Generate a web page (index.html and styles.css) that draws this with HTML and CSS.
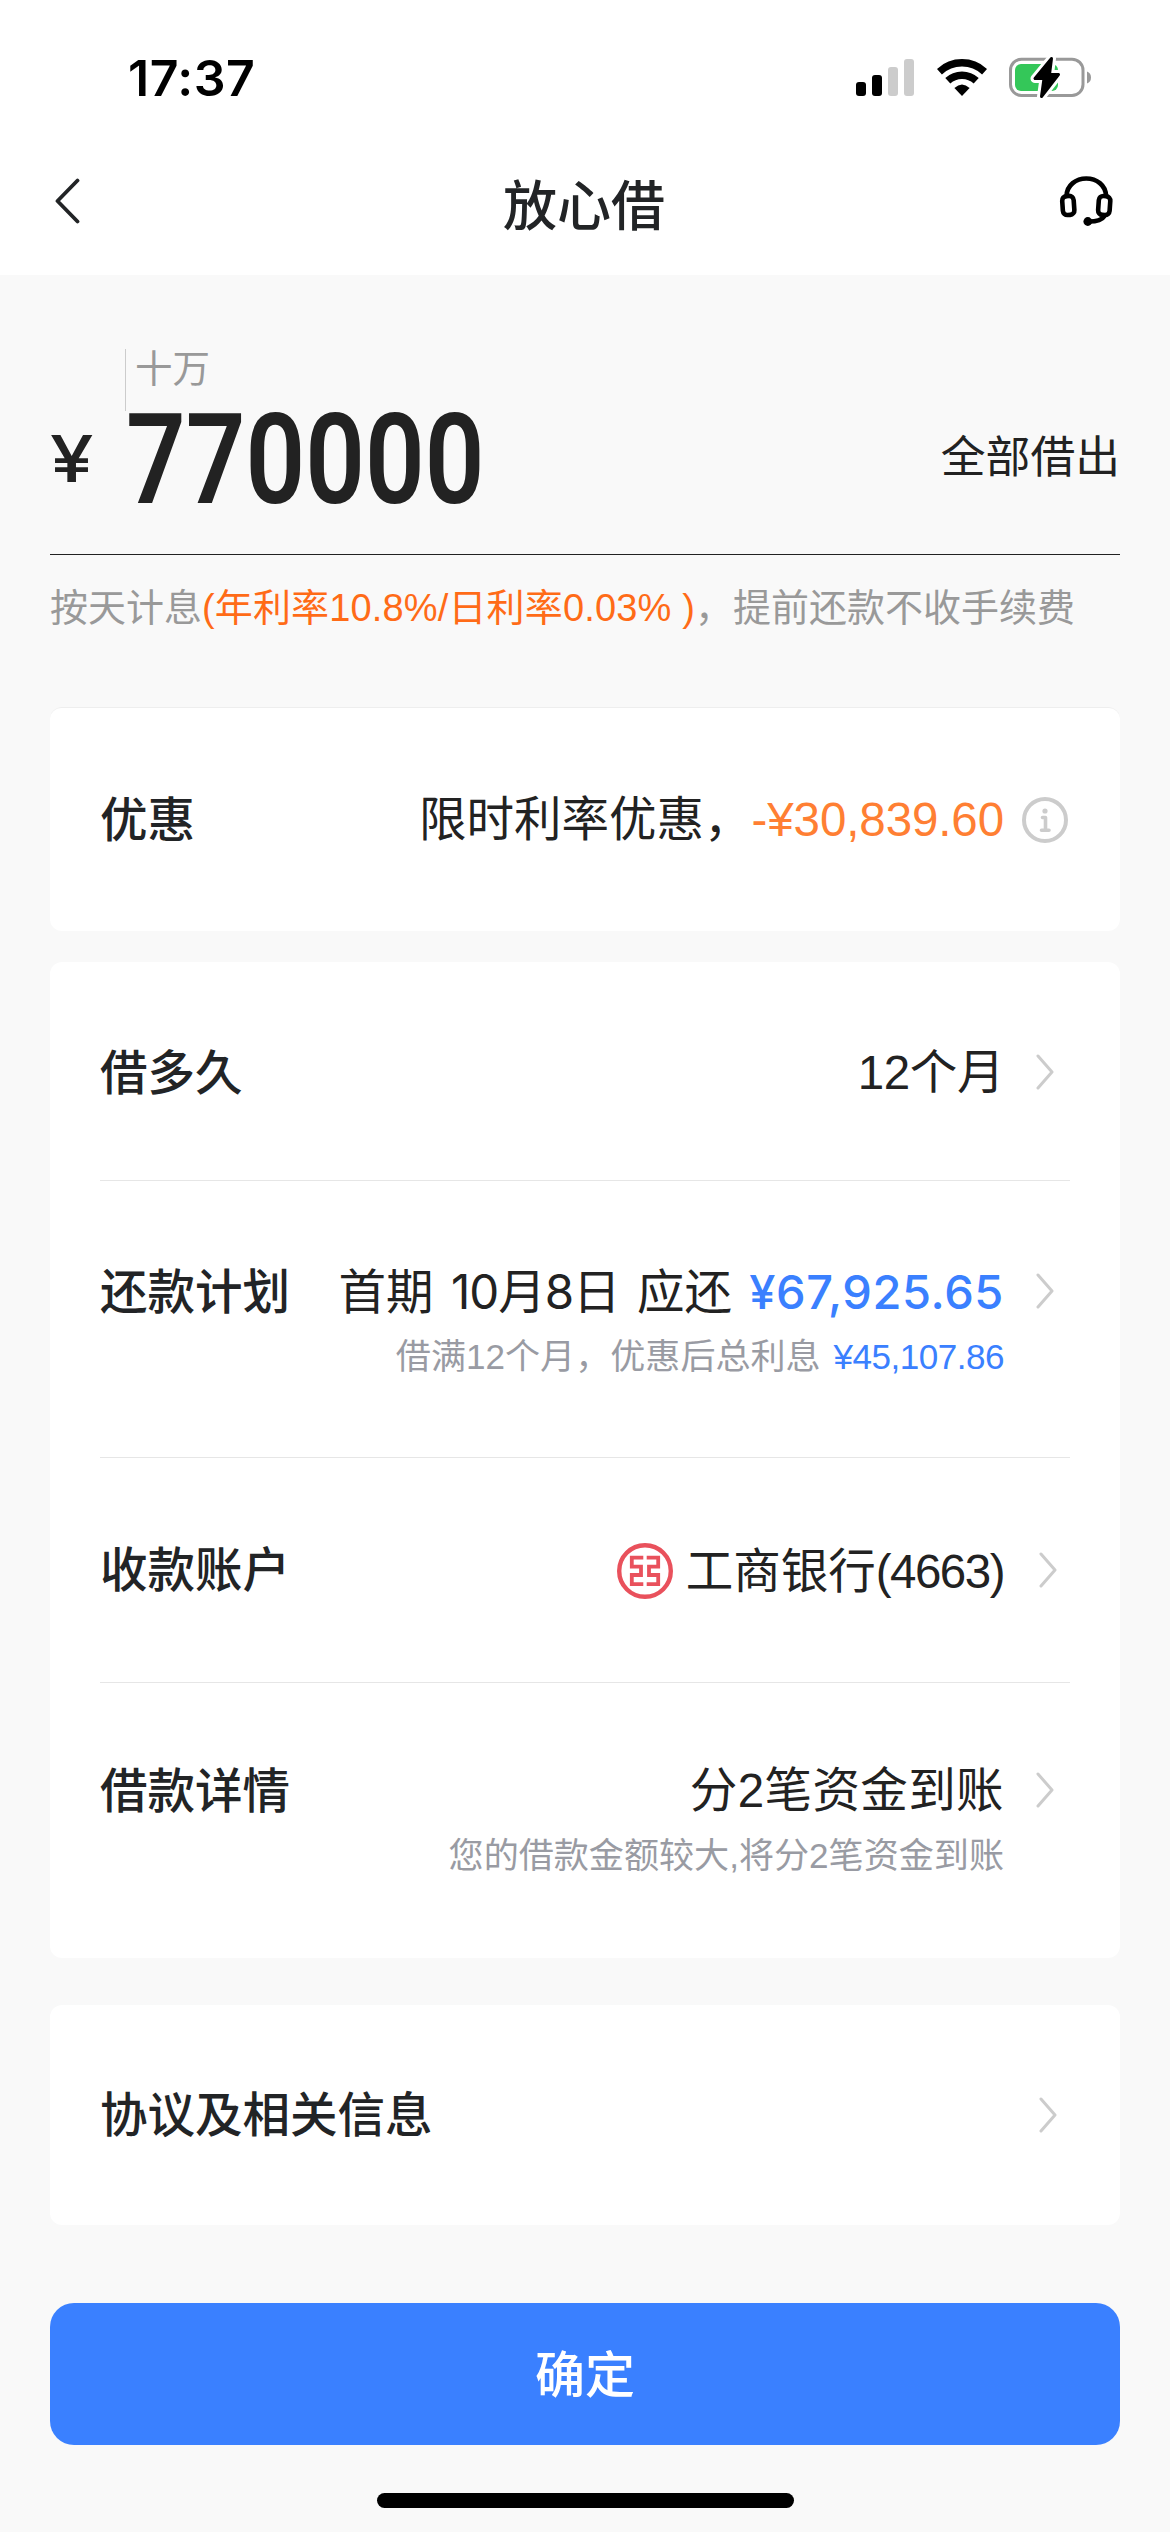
FILE: index.html
```html
<!DOCTYPE html>
<html lang="zh-CN">
<head>
<meta charset="utf-8">
<title>放心借</title>
<link rel="stylesheet" href="styles.css">
</head>
<body>
<svg width="0" height="0" class="defs">
  <symbol id="chevron" viewBox="0 0 18 36"><path d="M2 2 16 18 2 34" fill="none" stroke="#ccc" stroke-width="3" stroke-linecap="round" stroke-linejoin="round"/></symbol>
</svg>
<header class="header">
  <div class="status">
    <span class="time">17:37</span>
    <div class="status-icons">
      <svg width="58" height="37" viewBox="0 0 58 37"><rect y="23" width="10" height="14" rx="3"/><rect x="16" y="16" width="10" height="21" rx="3"/><rect x="32" y="8" width="10" height="29" rx="3" fill="#ccc"/><rect x="48" width="10" height="37" rx="3" fill="#ccc"/></svg>
      <svg class="wifi" width="50" height="38" viewBox="-25 -37 50 38"><g fill="none" stroke="#000" stroke-width="7.4"><path d="M-22.6 -24.3A33.2 33.2 0 0 1 22.6 -24.3"/><path d="M-14.2 -15.2A20.8 20.8 0 0 1 14.2 -15.2"/></g><path d="M0 0-7.6-8Q0-15 7.6-8Z"/></svg>
      <svg class="battery" width="84" height="44" viewBox="1008 55 84 44"><rect x="1010.5" y="59.2" width="72.5" height="36.3" rx="11" fill="none" stroke="#999" stroke-width="3"/><rect x="1015" y="64" width="43" height="27" rx="6" fill="#34c759"/><path d="M1087 71.5Q1091 73 1091 77.500T1087 83.500Z" fill="#999"/><path d="M1051.500 58.500 1035 78.500H1044L1041.500 96.500 1058.500 74.500H1049.500Z" stroke="#fff" stroke-width="9" stroke-linejoin="round"/><path d="M1051.500 58.500 1035 78.500H1044L1041.500 96.500 1058.500 74.500H1049.500Z" stroke="#000" stroke-width="3" stroke-linejoin="round"/></svg>
    </div>
  </div>
  <nav class="nav">
    <svg class="back" width="26" height="48" viewBox="0 0 26 48"><path d="M23.500 3.500 3.500 24l20 20.500" fill="none" stroke="#222426" stroke-width="3.800" stroke-linecap="round" stroke-linejoin="round"/></svg>
    <h1 class="title">放心借</h1>
    <svg class="headset" width="56" height="54" viewBox="1058 174 56 54"><g fill="none" stroke="#000" stroke-width="4.600" stroke-linecap="round"><path d="M1066.500 196C1067 185 1076 178.500 1086.300 178.500S1105.600 185 1106.100 196"/><rect x="1062.500" y="196" width="11.500" height="19" rx="4.500" transform="rotate(-4 1068 205)"/><rect x="1098.500" y="196" width="11.500" height="19" rx="4.500" transform="rotate(4 1104 205)"/><path d="M1104 216.500Q1101 221.500 1089 221.500"/></g><circle cx="1087.800" cy="221.500" r="4.400"/></svg>
  </nav>
</header>

<main class="content">
  <section class="amount">
    <span class="currency">¥</span>
    <div class="figure">
      <span class="unit">十万</span>
      <span class="number">770000</span>
    </div>
    <a class="all">全部借出</a>
  </section>
  <p class="rate">按天计息<span class="accent">(年利率10.8%/日利率0.03% )</span>，提前还款不收手续费</p>

  <section class="card promo">
    <span class="label">优惠</span>
    <span class="value">限时利率优惠，<span class="discount">-¥30,839.60</span></span>
    <svg class="info" width="46" height="46" viewBox="0 0 46 46"><circle cx="23" cy="23" r="21" fill="none" stroke="#ccc" stroke-width="4"/><circle cx="23" cy="14" r="2.600" fill="#ccc"/><path d="M20.500 20.500h3v12.500M19.500 33.200h7.500" fill="none" stroke="#ccc" stroke-width="3.600" stroke-linecap="round" stroke-linejoin="round"/></svg>
  </section>

  <section class="card details">
    <div class="row term">
      <span class="label">借多久</span>
      <div class="info-col"><span class="value months">12个月</span></div>
      <svg class="chevron"><use href="#chevron"/></svg>
    </div>
    <div class="row plan">
      <span class="label">还款计划</span>
      <div class="info-col">
        <span class="value due">首期 <span class="date">10月8日</span> 应还 <b class="due-amount">¥67,925.65</b></span>
        <span class="sub">借满12个月，优惠后总利息 <span class="interest">¥45,107.86</span></span>
      </div>
      <svg class="chevron"><use href="#chevron"/></svg>
    </div>
    <div class="row account">
      <span class="label">收款账户</span>
      <div class="info-col bank">
        <svg width="56" height="56" viewBox="0 0 56 56" fill="none" stroke="#e9515c"><circle cx="28" cy="28" r="25.800" stroke-width="4.400"/><path d="M26.300 14.600H14.800V23.600H24V32H14.800V41.200H26.300M29.700 14.600H41.200V23.600H32V32H41.200V41.200H29.700" stroke-width="3.800"/></svg>
        <span class="value">工商银行<span class="digits">(4663)</span></span>
      </div>
      <svg class="chevron"><use href="#chevron"/></svg>
    </div>
    <div class="row funds">
      <span class="label">借款详情</span>
      <div class="info-col">
        <span class="value transfers">分2笔资金到账</span>
        <span class="sub">您的借款金额较大,将分2笔资金到账</span>
      </div>
      <svg class="chevron"><use href="#chevron"/></svg>
    </div>
  </section>

  <section class="card agreement">
    <span class="label">协议及相关信息</span>
    <svg class="chevron"><use href="#chevron"/></svg>
  </section>

  <button class="confirm">确定</button>
</main>
<div class="home-indicator"></div>
</body>
</html>
```
FILE: styles.css
```css
* { box-sizing: border-box; }

body {
  margin: 0;
  width: 1170px;
  height: 2532px;
  overflow: hidden;
  display: flex;
  flex-direction: column;
  background: #f9f9f9;
  color: #222;
  font-family: "Liberation Sans", "Noto Sans CJK SC", sans-serif;
  font-size: 47.5px;
}

svg { display: block; flex: none; }
.defs { position: absolute; }

.header { height: 275px; background: #fff; }

.status {
  height: 135px;
  padding: 47px 78px 0 128px;
  display: flex;
  justify-content: space-between;
}
.time {
  font: 600 50px/62px Inter, sans-serif;
  letter-spacing: 0.5px;
  color: #000;
}
.status-icons { display: flex; align-items: flex-start; padding-top: 12px; }
.wifi { margin-left: 22.5px; }
.battery { margin: -4px 0 0 21.5px; }

.nav {
  height: 140px;
  padding: 0 56px 0 54px;
  display: grid;
  grid-template-columns: 56px 1fr 56px;
  align-items: center;
}
.back { margin-top: -8px; }
.headset { margin-top: -8px; }
.title {
  margin: 3px 0 0;
  text-align: center;
  font-size: 54px;
  font-weight: 500;
  line-height: 70px;
  color: #222426;
}

.content {
  display: flex;
  flex-direction: column;
  padding: 74px 50px 0;
}

.amount {
  height: 206px;
  display: flex;
  border-bottom: 1px solid #222;
}
.currency {
  width: 75px;
  padding-top: 71px;
  font: 500 65px/78px Inter, sans-serif;
  transform: scaleX(1.2);
  transform-origin: left;
}
.figure { width: 400px; }
.unit {
  display: block;
  width: 100px;
  height: 62px;
  padding-left: 9px;
  border-left: 1px solid #ccc;
  font-size: 37.5px;
  line-height: 40px;
  color: #999;
}
.number {
  display: block;
  width: max-content;
  margin: -20px 0 0 1px;
  font: 600 126px/138px Roboto, sans-serif;
  transform: scaleX(0.83);
  transform-origin: left;
}
.all {
  margin-left: auto;
  padding-top: 78px;
  font-size: 44.8px;
  line-height: 60px;
}

.rate {
  margin: 33px 0 0;
  height: 119px;
  font-size: 38px;
  line-height: 40px;
  white-space: nowrap;
  color: #999;
}
.accent { color: #ff6b17; letter-spacing: 0.15px; }

.card { background: #fff; border-radius: 12px; }
.label {
  padding-top: 1px;
  font-weight: 500;
  line-height: 60px;
  color: #222426;
  white-space: nowrap;
}
.value { line-height: 60px; white-space: nowrap; }

.promo {
  height: 224px;
  padding: 0 52px 0 50px;
  display: flex;
  align-items: center;
  border-top: 1px solid #eee;
}
.promo .label { padding-top: 3px; }
.promo .value { margin-left: auto; }
.discount { color: #ff7f33; letter-spacing: -0.1px; }
.info { margin-left: 18px; }

.details { height: 996px; margin-top: 31px; padding: 0 50px; }
.row { display: flex; border-bottom: 1px solid #e6e6e6; }
.row:last-child { border-bottom: 0; }
.term { height: 219px; padding-top: 81px; }
.plan { height: 277px; padding-top: 81px; }
.account { height: 225px; padding-top: 82px; }
.funds { height: 275px; padding-top: 78px; }

.info-col {
  margin-left: auto;
  display: flex;
  flex-direction: column;
  align-items: flex-end;
}
.months { letter-spacing: -0.4px; }
.transfers { letter-spacing: 0.4px; }
.bank {
  flex-direction: row;
  align-items: center;
  height: 62px;
  gap: 13px;
}
.bank .value { padding-top: 1px; }
.digits { letter-spacing: -1.5px; }
.sub {
  margin-top: 15px;
  font-size: 35.1px;
  line-height: 40px;
  color: #999ba3;
  white-space: nowrap;
}
.interest, .due-amount { color: #3a80ff; }
.interest { margin-left: 3px; letter-spacing: -0.5px; }
.due {
  font-family: Inter, "Noto Sans CJK SC", sans-serif;
  word-spacing: 4px;
}
.date { letter-spacing: -1px; }
.due-amount { font-weight: 500; font-size: 47px; letter-spacing: 0.6px; }

.chevron { width: 18px; height: 36px; margin: 11px 16px 0 32px; }
.account .chevron { margin: 12px 13px 0 35px; }

.agreement {
  height: 220px;
  margin-top: 47px;
  padding: 0 63px 0 50px;
  display: flex;
  align-items: center;
  justify-content: space-between;
}
.agreement .chevron { margin: 0; }

.confirm {
  height: 142px;
  margin-top: 78px;
  padding: 0 0 7px;
  border: 0;
  border-radius: 24px;
  background: #3a80ff;
  color: #fff;
  font: 500 50px/60px "Noto Sans CJK SC", sans-serif;
}

.home-indicator {
  width: 417px;
  height: 15px;
  margin: 48px 0 0 377px;
  border-radius: 8px;
  background: #000;
}
```
